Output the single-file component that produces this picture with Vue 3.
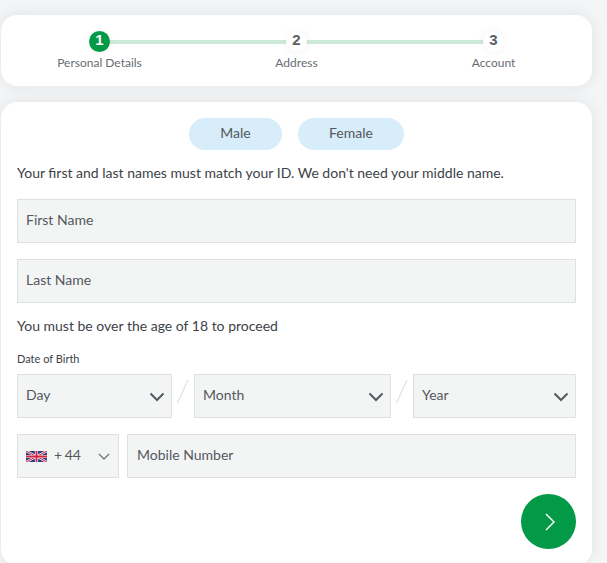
<script setup>
const steps = [
  { n: 1, label: 'Personal Details', active: true },
  { n: 2, label: 'Address' },
  { n: 3, label: 'Account' }
]
const dob = ['Day', 'Month', 'Year']
</script>

<template>
  <div class="page">
    <section class="card stepper">
      <div v-for="s in steps" :key="s.n" class="step">
        <span class="dot" :class="{ active: s.active }">{{ s.n }}</span>
        <span class="step-label">{{ s.label }}</span>
      </div>
    </section>

    <section class="card form">
      <div class="pills">
        <button class="pill male" type="button">Male</button>
        <button class="pill female" type="button">Female</button>
      </div>
      <p class="note first">Your first and last names must match your ID. We don't need your middle name.</p>
      <div class="field">First Name</div>
      <div class="field">Last Name</div>
      <p class="note second">You must be over the age of 18 to proceed</p>
      <div class="dob-label">Date of Birth</div>
      <div class="dob">
        <template v-for="(d, i) in dob" :key="d">
          <svg v-if="i > 0" class="slash" width="14" height="26" viewBox="0 0 14 26"><path d="M12 1 1.500 24" stroke="#e2e4e4" stroke-width="1.300" fill="none" /></svg>
          <div class="field select" :class="'sel-' + i">
            <span>{{ d }}</span>
            <svg class="chev" width="16" height="10" viewBox="0 0 16 10"><path d="M1.500 1.500 8 8l6.500-6.500" stroke="#555a60" stroke-width="2" fill="none" /></svg>
          </div>
        </template>
      </div>
      <div class="phone">
        <div class="field code">
          <svg class="flag" width="21" height="11" viewBox="0 0 21 11">
            <rect width="21" height="11" fill="#2b3f87" />
            <path d="M0 0 21 11M21 0 0 11" stroke="#f4f4f6" stroke-width="2.400" />
            <path d="M0 0 21 11M21 0 0 11" stroke="#d3223f" stroke-width="1" />
            <path d="M10.500 0v11M0 5.500h21" stroke="#f4f4f6" stroke-width="3.200" />
            <path d="M10.500 0v11M0 5.500h21" stroke="#d3223f" stroke-width="1.800" />
          </svg>
          <span class="dial">+ 44</span>
          <svg class="chev-thin" width="12" height="7" viewBox="0 0 12 7"><path d="M.8.8 6 6 11.200.8" stroke="#5c6167" stroke-width="1.100" fill="none" /></svg>
        </div>
        <div class="field mobile">Mobile Number</div>
      </div>
      <div class="actions">
        <button class="next" type="button" aria-label="Next">
          <svg width="10" height="18" viewBox="0 0 10 18"><path d="M1 1 9 9l-8 8" stroke="#fff" stroke-width="1.500" fill="none" /></svg>
        </button>
      </div>
    </section>
  </div>
</template>

<style scoped>
.page {
  width: 607px;
  height: 563px;
  box-sizing: border-box;
  padding: 15px 15px 0 1px;
  background: #f3f5f6;
  overflow: hidden;
  font-family: Lato, "Liberation Sans", sans-serif;
  color: #494e54;
}
.card {
  background: #fff;
  border-radius: 16px;
  box-shadow: 0 0 16px rgba(0, 0, 0, 0.08);
}
.stepper {
  height: 71px;
  display: grid;
  grid-template-columns: repeat(3, 1fr);
  margin-bottom: 16px;
}
.step {
  position: relative;
  display: flex;
  flex-direction: column;
  align-items: center;
  padding-top: 16px;
}
.step:not(:last-child)::after {
  content: "";
  position: absolute;
  top: 25px;
  left: 50%;
  width: 100%;
  height: 4px;
  background: #cde9da;
}
.dot {
  position: relative;
  z-index: 1;
  width: 21px;
  height: 21px;
  border-radius: 50%;
  background: #fff;
  box-shadow: 0 0 8px rgba(0, 0, 0, 0.05);
  font: 700 15px/17px "Liberation Sans", sans-serif;
  text-align: center;
  color: #5b6066;
}
.dot.active {
  background: #029a47;
  color: #fff;
}
.step-label {
  margin-top: 3px;
  font-size: 12px;
  line-height: 16px;
  color: #686d73;
}
.form {
  height: 463px;
  box-sizing: border-box;
  padding: 16px 16px 0;
}
.pills {
  display: flex;
  justify-content: center;
  gap: 16px;
}
.pill {
  height: 32px;
  padding: 0 0 4px;
  border: 0;
  border-radius: 16px;
  background: #d7edf9;
  font: 400 14px Lato, sans-serif;
  color: #53585e;
}
.male { width: 93px; }
.female { width: 106px; }
.note {
  margin: 0;
  font-size: 14px;
  line-height: 18px;
  color: #3d4248;
}
.note.first { margin: 14px 0 17px; }
.note.second { margin: 14px 0 0; }
.field {
  box-sizing: border-box;
  height: 44px;
  display: flex;
  align-items: center;
  padding: 0 8px 4px;
  background: #f3f5f5;
  border: 1px solid #dfe1e1;
  font-size: 14px;
  color: #53585e;
}
.field + .field { margin-top: 16px; }
.dob-label {
  margin-top: 17px;
  font-size: 11px;
  line-height: 14px;
  color: #3d4248;
}
.dob {
  display: flex;
  align-items: flex-start;
  margin-top: 8px;
  gap: 4px;
}
.dob .field { margin-top: 0; justify-content: space-between; }
.slash { flex: none; margin-top: 5px; }
.sel-0 { width: 155px; }
.sel-1 { width: 197px; }
.sel-2 { width: 163px; }
.chev { margin-top: 6px; margin-right: -2px; }
.phone {
  display: flex;
  gap: 8px;
  margin-top: 16px;
}
.phone .field { margin-top: 0; }
.code { width: 102px; padding-right: 8px; }
.flag { flex: none; margin-top: 4px; }
.dial { margin-left: 7px; word-spacing: -1px; }
.chev-thin { margin-left: auto; margin-top: 4px; }
.mobile { flex: 1; padding-left: 9px; }
.actions {
  display: flex;
  justify-content: flex-end;
  margin-top: 16px;
}
.next {
  width: 55px;
  height: 55px;
  border: 0;
  padding: 0 0 0 2px;
  border-radius: 50%;
  background: #029a47;
  display: flex;
  align-items: center;
  justify-content: center;
}
</style>

<style>
html, body { background: #f3f5f6; overflow: hidden; }
</style>
